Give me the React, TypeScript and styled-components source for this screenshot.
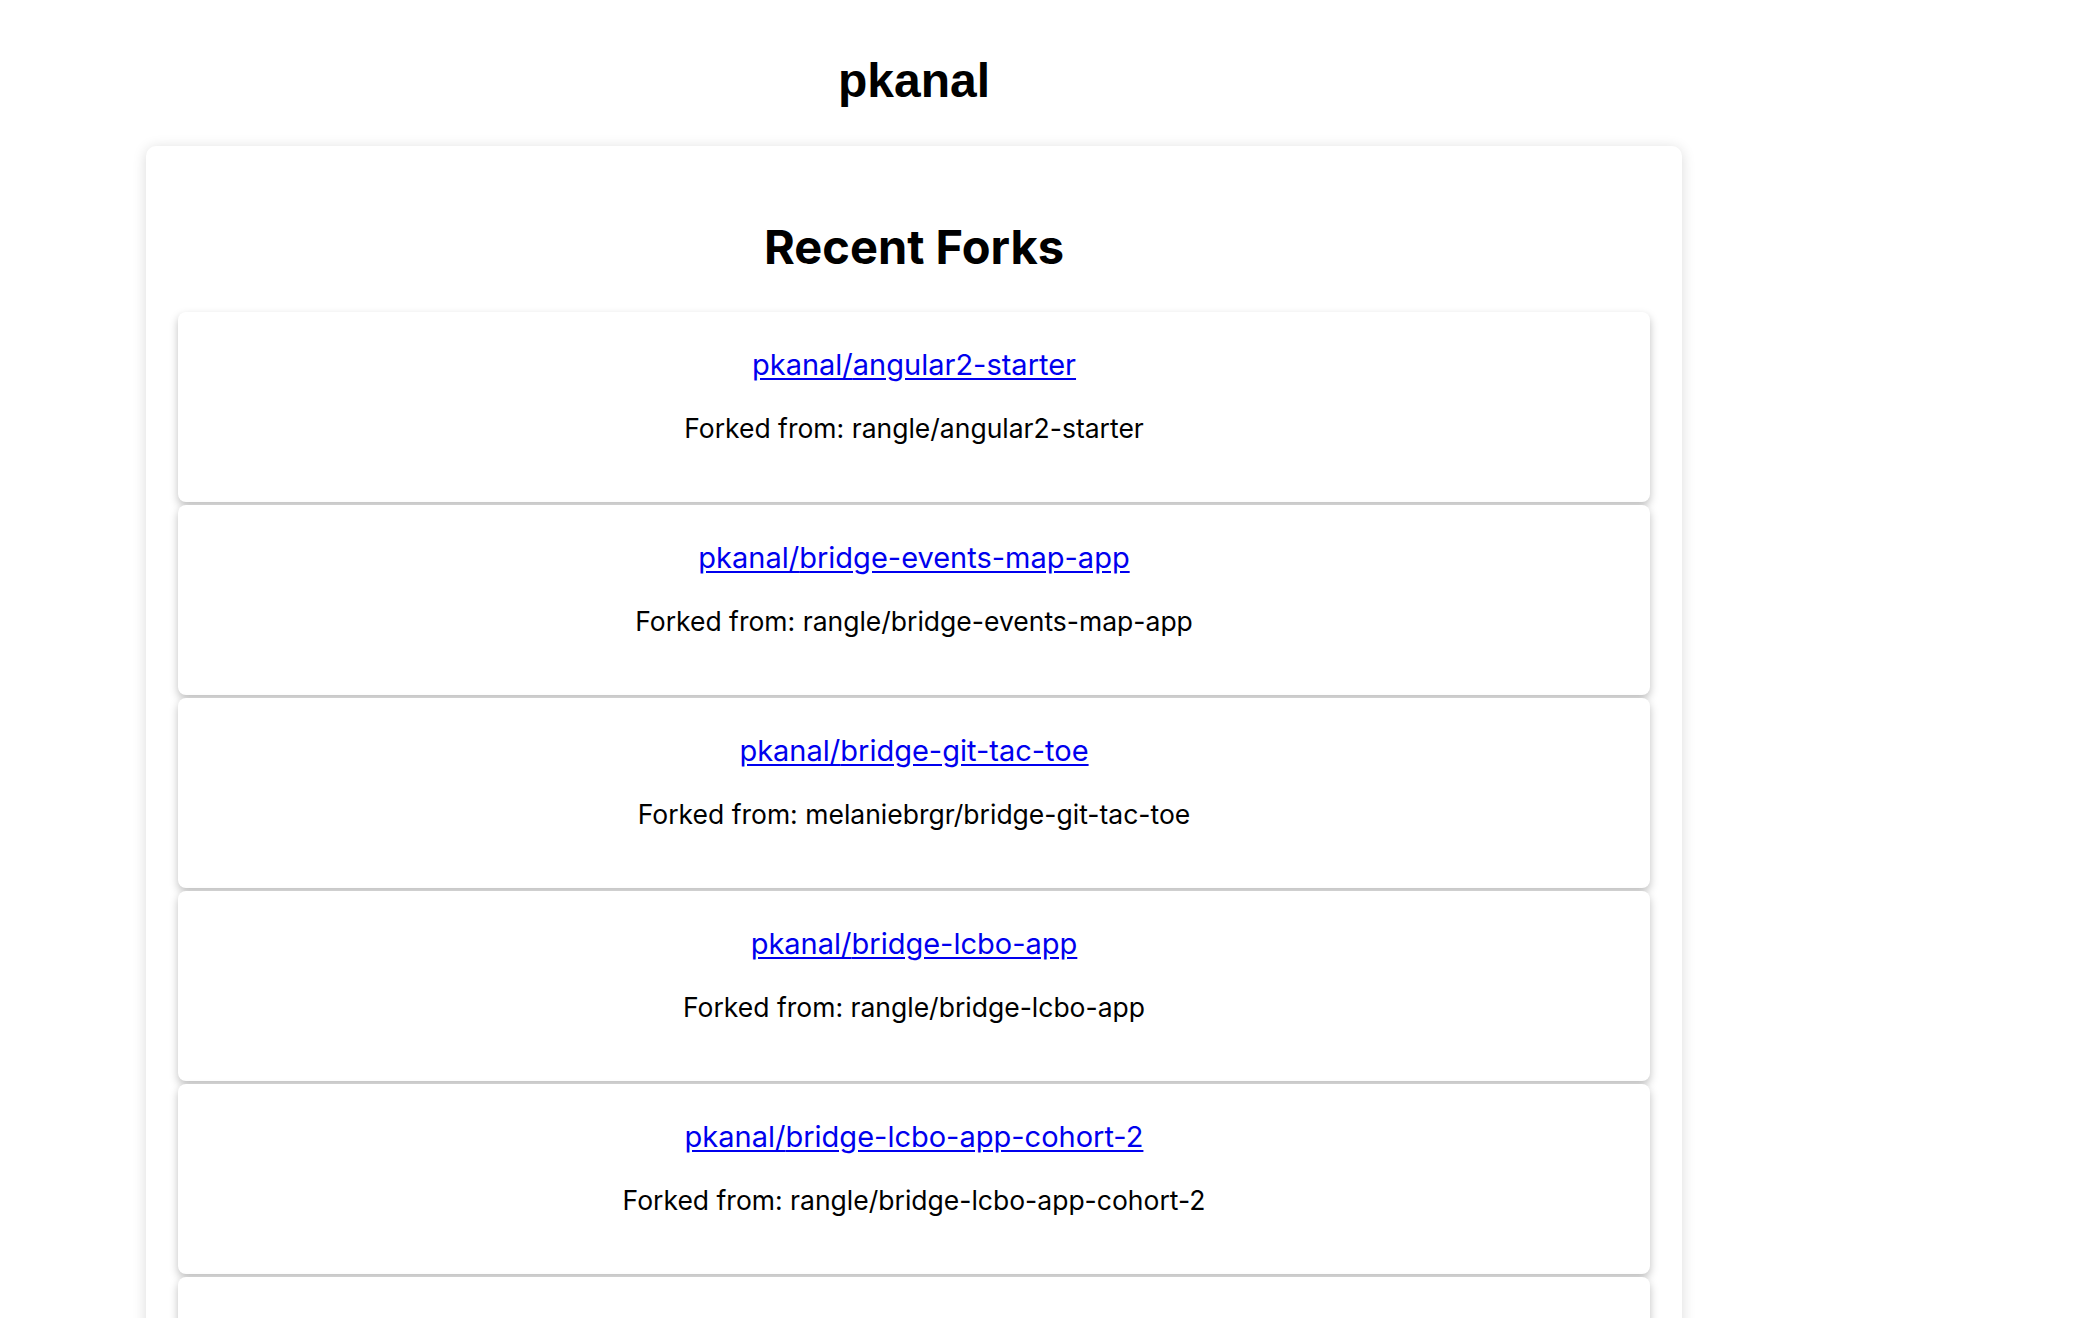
import styled, { createGlobalStyle } from 'styled-components'

const GlobalStyle = createGlobalStyle`
    body {
        margin: 0;
        background: #fff;
        color: #000;
        font-family: "Liberation Sans", Arial, sans-serif;
    }
`

const Page = styled.div`
    width: 1536px;
    margin-left: 146px;
`

const UserName = styled.h1`
    margin: 53px 0 38px;
    font-size: 48px;
    font-weight: 700;
    text-align: center;
`

const Panel = styled.section`
    background: #fff;
    border-radius: 10px;
    box-shadow: 0 2px 14px rgba(0, 0, 0, 0.15);
    padding: 72px 32px 32px;
    font-family: Inter, "Noto Sans", sans-serif;
`

const PanelTitle = styled.h2`
    margin: 0 0 37px;
    font-size: 47px;
    font-weight: 700;
    text-align: center;
`

const ForkList = styled.div`
    display: flex;
    flex-direction: column;
    gap: 3px;
`

const ForkCard = styled.article`
    display: flex;
    flex-direction: column;
    align-items: center;
    gap: 30px;
    height: 190px;
    box-sizing: border-box;
    padding: 35px 32px 0;
    background: #fff;
    border-radius: 8px;
    box-shadow: 0 4px 9px rgba(0, 0, 0, 0.25);
`

const RepoLink = styled.a`
    font-size: 29px;
    line-height: 35px;
    color: #0000ee;
    text-decoration: underline;
    text-underline-offset: 3px;
`

const Origin = styled.p`
    margin: 0;
    font-size: 26.5px;
    line-height: 32px;
`

const forks = [
    { repo: 'angular2-starter', parent: 'rangle/angular2-starter' },
    { repo: 'bridge-events-map-app', parent: 'rangle/bridge-events-map-app' },
    { repo: 'bridge-git-tac-toe', parent: 'melaniebrgr/bridge-git-tac-toe' },
    { repo: 'bridge-lcbo-app', parent: 'rangle/bridge-lcbo-app' },
    { repo: 'bridge-lcbo-app-cohort-2', parent: 'rangle/bridge-lcbo-app-cohort-2' },
    { repo: 'bridge-photo-map-app', parent: 'rangle/bridge-photo-map-app' },
]

export default function App() {
    return (
        <>
            <GlobalStyle />
            <Page>
                <UserName>pkanal</UserName>
                <Panel>
                    <PanelTitle>Recent Forks</PanelTitle>
                    <ForkList>
                        {forks.map(fork => (
                            <ForkCard key={fork.repo}>
                                <RepoLink href="#">pkanal/{fork.repo}</RepoLink>
                                <Origin>Forked from: {fork.parent}</Origin>
                            </ForkCard>
                        ))}
                    </ForkList>
                </Panel>
            </Page>
        </>
    )
}
